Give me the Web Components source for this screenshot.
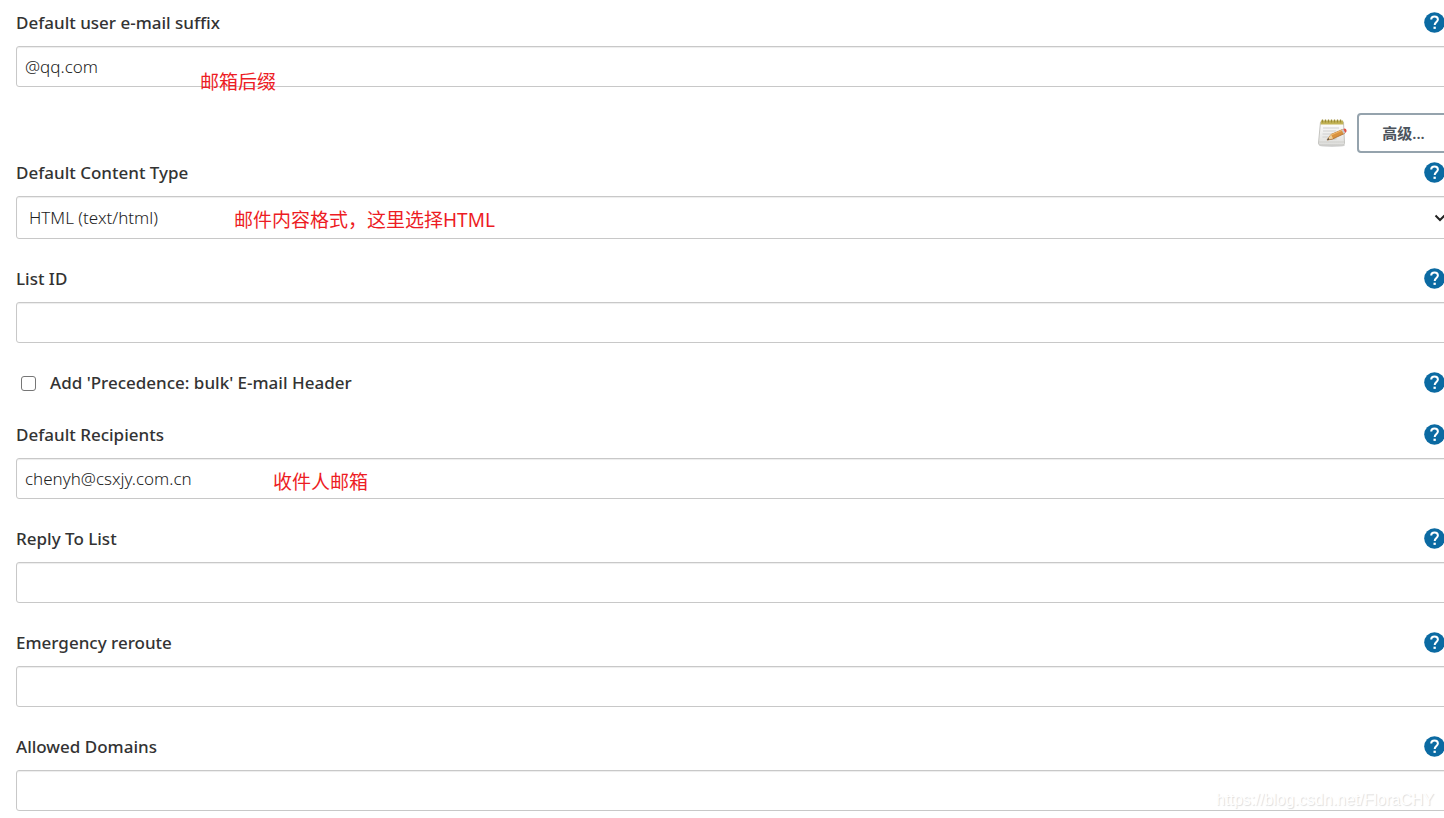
<!DOCTYPE html>
<html lang="zh-CN">
<head>
<meta charset="utf-8">
<title>Extended E-mail Notification</title>
<style>
  :root {
    --text-color: #333;
    --border-color: #c8c8c8;
    --help-color: #0b6aa2;
    --note-color: #ed1c24;
  }

  body {
    margin: 0;
    overflow: hidden;
    background: #fff;
    color: var(--text-color);
    font-family: "Noto Sans", "Open Sans", "Noto Sans CJK SC", sans-serif;
    font-size: 17px;
    line-height: 24px;
  }
</style>
</head>
<body>
<config-form>
  <form-field label="Default user e-mail suffix" value="@qq.com">
    <field-note slot="note" style="--note-left: 184px; --note-top: 24px">邮箱后缀</field-note>
  </form-field>
  <advanced-row>高级...</advanced-row>
  <form-field label="Default Content Type" type="select" value="HTML (text/html)">
    <field-note slot="note" style="--note-left: 218px">邮件内容格式，这里选择HTML</field-note>
  </form-field>
  <form-field label="List ID"></form-field>
  <check-field>Add 'Precedence: bulk' E-mail Header</check-field>
  <form-field label="Default Recipients" value="chenyh@csxjy.com.cn">
    <field-note slot="note" style="--note-left: 257px">收件人邮箱</field-note>
  </form-field>
  <form-field label="Reply To List"></form-field>
  <form-field label="Emergency reroute"></form-field>
  <form-field label="Allowed Domains"></form-field>
  <span slot="watermark">https://blog.csdn.net/FloraCHY</span>
</config-form>

<script>
class ConfigForm extends HTMLElement {
  constructor() {
    super();
    this.attachShadow({ mode: "open" });
    this.shadowRoot.innerHTML = `
      <style>
        :host {
          display: block;
          position: relative;
        }

        /* the form runs a little past the right edge of its pane */
        form {
          display: flex;
          flex-direction: column;
          gap: 28px;
          margin: 0 -6px 0 16px;
          padding: 11px 0 8px;
        }

        .watermark {
          position: absolute;
          right: 10px;
          bottom: 9px;
          color: #fff;
          font: 16px/20px "Liberation Sans", sans-serif;
          text-shadow: 1px 1px 1px #ddd;
          pointer-events: none;
        }
      </style>
      <form>
        <slot></slot>
      </form>
      <div class="watermark"><slot name="watermark"></slot></div>
    `;
  }
}

class HelpButton extends HTMLElement {
  constructor() {
    super();
    this.attachShadow({ mode: "open" });
    this.shadowRoot.innerHTML = `
      <style>
        :host {
          display: block;
          margin-right: 5px;
        }

        button {
          display: block;
          padding: 1px 0 2px;
          border: none;
          background: none;
          cursor: pointer;
        }

        svg {
          display: block;
          width: 21px;
          height: 21px;
        }
      </style>
      <button type="button" aria-label="Help">
        <svg viewBox="0 0 21 21">
          <circle cx="10.5" cy="10.5" r="10.3" fill="var(--help-color)"/>
          <path d="M7.2 7.6C7.2 5.7 8.6 4.4 10.5 4.4s3.4 1.2 3.4 3c0 2.4-3.2 2.7-3.2 5.5" fill="none" stroke="#fff" stroke-width="2"/>
          <rect x="9.5" y="14.7" width="2.3" height="2.2" fill="#fff"/>
        </svg>
      </button>
    `;
  }
}

class FieldNote extends HTMLElement {
  constructor() {
    super();
    this.attachShadow({ mode: "open" });
    this.shadowRoot.innerHTML = `
      <style>
        :host {
          position: absolute;
          left: var(--note-left, 0);
          top: var(--note-top, 12px);
          color: var(--note-color);
          font-size: 19px;
          line-height: 24px;
          white-space: nowrap;
          pointer-events: none;
        }
      </style>
      <slot></slot>
    `;
  }
}

class FormField extends HTMLElement {
  constructor() {
    super();
    this.attachShadow({ mode: "open" });
  }

  connectedCallback() {
    this.render();
  }

  render() {
    const label = this.getAttribute("label") || "";
    const value = this.getAttribute("value") || "";
    const isSelect = this.getAttribute("type") === "select";

    const control = isSelect
      ? `<select id="control"><option>${value}</option></select>
         <svg class="chevron" viewBox="0 0 12 8"><path d="M1.5 1.5L6 6l4.5-4.5" fill="none" stroke="#222" stroke-width="2"/></svg>`
      : `<input id="control" type="text" value="${value}">`;

    this.shadowRoot.innerHTML = `
      <style>
        :host {
          display: block;
        }

        .header {
          display: flex;
          justify-content: space-between;
          align-items: center;
          margin-bottom: 11px;
        }

        label {
          font-weight: 500;
        }

        .control {
          position: relative;
        }

        input,
        select {
          display: block;
          box-sizing: border-box;
          width: 100%;
          height: 41px;
          margin: 0;
          padding: 0 8px;
          border: 1px solid var(--border-color);
          border-radius: 3px;
          background: #fff;
          box-shadow: inset 0 1px 1px rgba(0, 0, 0, 0.075);
          color: #222;
          font: inherit;
          font-weight: 300;
        }

        select {
          height: 43px;
          padding: 0 12px;
          appearance: none;
        }

        .chevron {
          position: absolute;
          top: 18px;
          right: 4px;
          width: 12px;
          height: 8px;
          pointer-events: none;
        }
      </style>
      <div class="header">
        <label for="control">${label}</label>
        <help-button></help-button>
      </div>
      <div class="control">
        ${control}
        <slot name="note"></slot>
      </div>
    `;
  }
}

class CheckField extends HTMLElement {
  constructor() {
    super();
    this.attachShadow({ mode: "open" });
    this.shadowRoot.innerHTML = `
      <style>
        :host {
          display: flex;
          justify-content: space-between;
          align-items: center;
        }

        label {
          display: flex;
          align-items: center;
          gap: 14px;
          padding-left: 5px;
          font-weight: 500;
        }

        input {
          appearance: none;
          box-sizing: border-box;
          width: 15px;
          height: 15px;
          margin: 0;
          border: 1px solid #767676;
          border-radius: 3px;
          background: #fff;
        }

        input:checked {
          background: var(--help-color);
        }
      </style>
      <label><input type="checkbox"><slot></slot></label>
      <help-button></help-button>
    `;
  }
}

class AdvancedRow extends HTMLElement {
  constructor() {
    super();
    this.attachShadow({ mode: "open" });
    this.shadowRoot.innerHTML = `
      <style>
        :host {
          display: flex;
          justify-content: flex-end;
          align-items: center;
          gap: 9px;
          margin: -2px 0 -20px;
        }

        svg {
          width: 32px;
          height: 32px;
        }

        button {
          box-sizing: border-box;
          width: 93px;
          height: 40px;
          padding: 0;
          border: 2px solid #95a3ad;
          border-radius: 4px;
          background: #fff;
          color: #4d545d;
          font: inherit;
          font-size: 15px;
          font-weight: 600;
        }
      </style>
      <svg viewBox="0 0 32 32" aria-hidden="true">
        <defs>
          <linearGradient id="paper" x1="0" y1="0" x2="0" y2="1">
            <stop offset="0" stop-color="#fff"/>
            <stop offset="1" stop-color="#dededc"/>
          </linearGradient>
        </defs>
        <ellipse cx="16" cy="28.500" rx="13" ry="1.500" fill="#bbb" opacity=".6"/>
        <path d="M4.500 5h23l1 21.500q0 1.500-1.500 1.500h-23Q2.500 28 2.500 26z" fill="url(#paper)" stroke="#c4c4c0"/>
        <path d="M3 25h25" stroke="#cfcfcb"/>
        <path d="M5 3.500h22l.5 4h-23z" fill="#c2b355"/>
        <path d="M6.500 2.500v3m3-3v3m3-3v3m3-3v3m3-3v3m3-3v3m3-3v3" stroke="#9a8c35" stroke-width="1.300"/>
        <path d="M7 11h16M7 14h13M6.500 17h11M6.500 20h7" stroke="#d0d0d0" stroke-width="1.200"/>
        <path d="M10.500 23.500l11-1.500-6-1.500z" fill="#999" opacity=".6"/>
        <path d="M11 23l4-5.500 11.500-5 2 4-12 5.500z" fill="#d9923f" stroke="#ad6c2b" stroke-width=".8"/>
        <path d="M15 18l11-4.700" stroke="#f0b86b" stroke-width="1.200"/>
        <path d="M11 23l4-5.500 2 4z" fill="#edcf9c"/>
        <path d="M11 23l1.400-2 1 1.500z" fill="#333"/>
        <path d="M25.500 12.700l1.800-.8 2 4-1.800.9z" fill="#c9cbd0"/>
        <path d="M27.300 11.900l1.200-.5q1.500-.2 2 1.500.4 1.700-.8 2.500l-.4.500z" fill="#df5047"/>
      </svg>
      <button type="button"><slot></slot></button>
    `;
  }
}

customElements.define("config-form", ConfigForm);
customElements.define("help-button", HelpButton);
customElements.define("field-note", FieldNote);
customElements.define("form-field", FormField);
customElements.define("check-field", CheckField);
customElements.define("advanced-row", AdvancedRow);
</script>
</body>
</html>
